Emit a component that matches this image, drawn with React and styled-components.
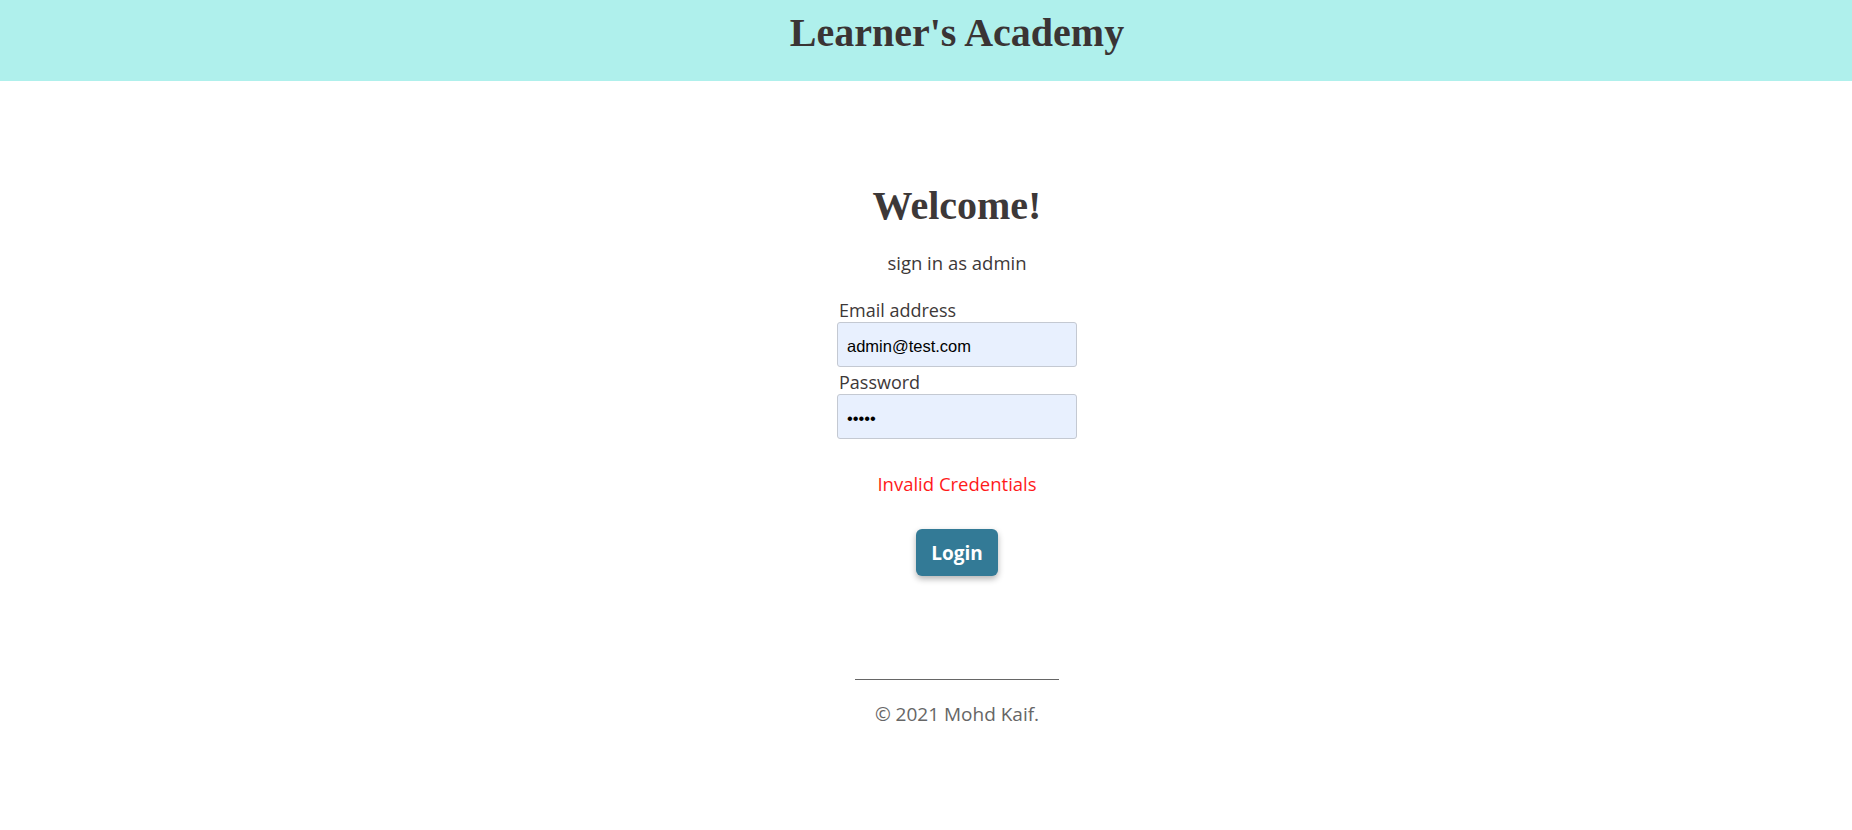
import React from 'react';
import styled, { createGlobalStyle } from 'styled-components';

const GlobalStyle = createGlobalStyle`
    body {
        margin: 0;
        background: #ffffff;
        font-family: "Open Sans", "Noto Sans", sans-serif;
        color: #3d3838;
    }
`;

function App() {
    return (
        <>
            <GlobalStyle />
            <StHeader>
                <StBrand>Learner's Academy</StBrand>
            </StHeader>
            <StMain>
                <StTitle>Welcome!</StTitle>
                <StSub>sign in as admin</StSub>
                <StForm>
                    <StLabel htmlFor="email">Email address</StLabel>
                    <StInput id="email" type="email" defaultValue="admin@test.com" />
                    <StLabel htmlFor="password" $gap={6}>Password</StLabel>
                    <StInput id="password" type="password" defaultValue="admin" />
                </StForm>
                <StError>Invalid Credentials</StError>
                <StLoginBtn>Login</StLoginBtn>
            </StMain>
            <StFooter>
                <StRule />
                <StCopy>© 2021 Mohd Kaif.</StCopy>
            </StFooter>
        </>
    );
}

export default App;

const StHeader = styled.header`
    height: 81px;
    padding-left: 62px;
    background-color: #aff0ec;
    display: flex;
    justify-content: center;
    align-items: flex-start;
`;

const StBrand = styled.h1`
    margin: 0;
    padding-top: 10px;
    font-family: "Liberation Serif", "Times New Roman", serif;
    font-weight: bold;
    font-size: 40px;
    line-height: 46px;
    color: #3a3434;
`;

const StMain = styled.main`
    display: flex;
    flex-direction: column;
    align-items: center;
    padding-top: 102px;
    padding-left: 62px;
`;

const StTitle = styled.h2`
    margin: 0;
    font-family: "Liberation Serif", "Times New Roman", serif;
    font-weight: bold;
    font-size: 40px;
    line-height: 46px;
    color: #3d3838;
`;

const StSub = styled.p`
    margin: 22px 0 0;
    font-size: 18.5px;
    line-height: 24px;
`;

const StForm = styled.form`
    display: flex;
    flex-direction: column;
    width: 240px;
    margin-top: 26px;
`;

const StLabel = styled.label`
    font-size: 18px;
    line-height: 18px;
    padding-left: 2px;
    margin-top: ${(p) => p.$gap || 0}px;
`;

const StInput = styled.input`
    box-sizing: border-box;
    height: 45px;
    width: 240px;
    margin-top: 3px;
    padding: 4px 9px 0;
    border: 1px solid #c4c9d2;
    border-radius: 3px;
    background-color: #e8f0fe;
    font-family: "Liberation Sans", Arial, sans-serif;
    font-size: 16.5px;
    color: #000;
    outline: none;
`;

const StError = styled.p`
    margin: 33px 0 0;
    font-size: 18.5px;
    line-height: 24px;
    color: #ff1a1a;
`;

const StLoginBtn = styled.button`
    margin-top: 33px;
    width: 82px;
    height: 47px;
    border: none;
    border-radius: 6px;
    background-color: #337a96;
    color: #ffffff;
    font-family: "Open Sans", "Noto Sans", sans-serif;
    font-weight: bold;
    font-size: 19px;
    box-shadow: 0 3px 6px rgba(0, 0, 0, 0.3);
    cursor: pointer;
`;

const StFooter = styled.footer`
    display: flex;
    flex-direction: column;
    align-items: center;
    padding-left: 62px;
    margin-top: 103px;
`;

const StRule = styled.hr`
    width: 204px;
    margin: 0;
    border: none;
    border-top: 1px solid #666;
`;

const StCopy = styled.p`
    margin: 22px 0 0;
    font-size: 19px;
    line-height: 24px;
    color: #666;
`;
